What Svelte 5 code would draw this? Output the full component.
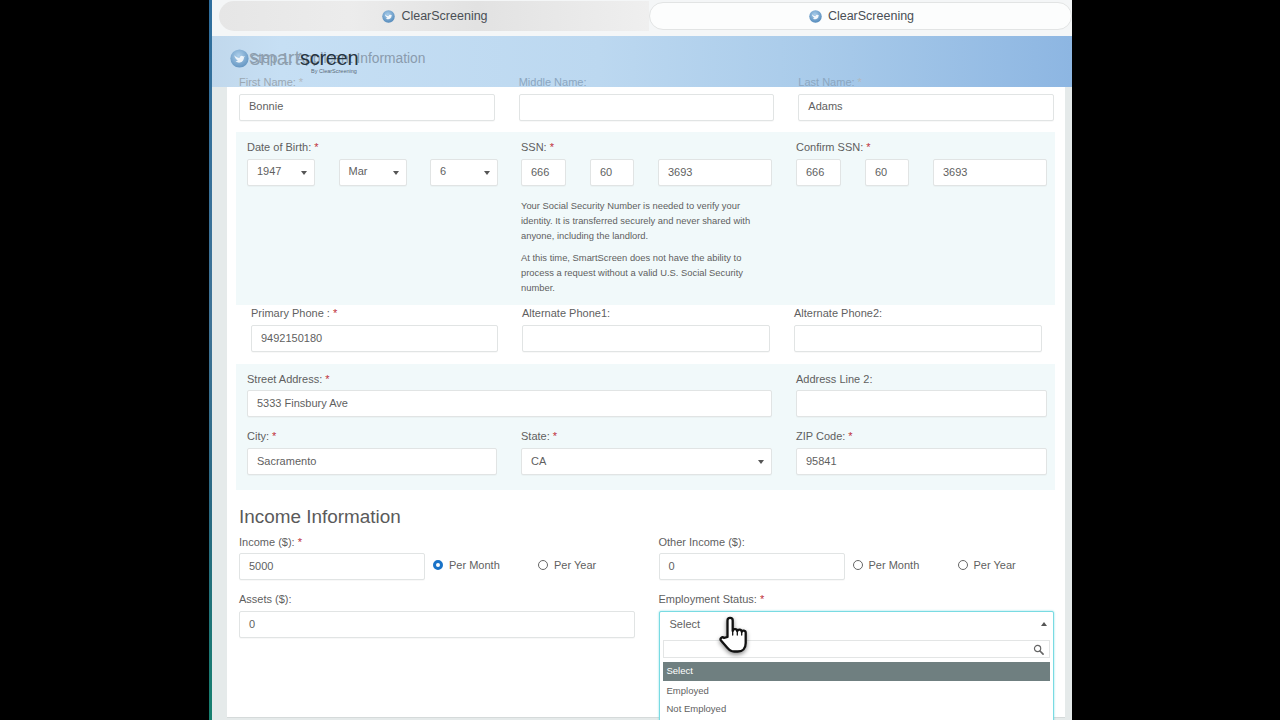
<script>
  const row1 = [
    { label: 'First Name:', req: true, value: 'Bonnie' },
    { label: 'Middle Name:', req: false, value: '' },
    { label: 'Last Name:', req: true, value: 'Adams' }
  ];
  const phones = [
    { label: 'Primary Phone :', req: true, value: '9492150180' },
    { label: 'Alternate Phone1:', req: false, value: '' },
    { label: 'Alternate Phone2:', req: false, value: '' }
  ];
</script>

{#snippet badge(cls)}
  <svg class={cls} viewBox="0 0 20 20" aria-hidden="true">
    <defs>
      <radialGradient id="orb{cls}" cx="45%" cy="35%" r="70%">
        <stop offset="0" stop-color="#a9cdea" />
        <stop offset="1" stop-color="#4f86b8" />
      </radialGradient>
    </defs>
    <circle cx="10" cy="10" r="9.6" fill="url(#orb{cls})" />
    <path d="M4.5 6.5c2 2 3.6 2.8 5.6 3 0-2 2.4-3.2 4-1.6l1.6-.5-1 1.5c0 3.6-3.2 6-6.2 5.4-1-.2-2-.7-2.6-1.4 1 0 1.8-.2 2.4-.8-1.600-.8-3.400-3.200-3.800-5.600z" fill="#fff" opacity=".9" />
  </svg>
{/snippet}

{#snippet req()}<span class="star">*</span>{/snippet}

{#snippet select(value)}
  <div class="box select"><span>{value}</span><i class="caret"></i></div>
{/snippet}

{#snippet radio(text, on)}
  <div class="radio"><i class={on ? 'dot on' : 'dot'}></i><span>{text}</span></div>
{/snippet}

<div class="screen">
  <div class="strip"></div>
  <div class="browser">
    <div class="tabs">
      <div class="tab left">{@render badge('tabicon')}<span>ClearScreening</span></div>
      <div class="tab right">{@render badge('tabicon')}<span>ClearScreening</span></div>
    </div>

    <header class="banner">
      <h1>Step 1: Applicant Information</h1>
      <div class="logo">
        {@render badge('logoicon')}
        <div class="wordmark"><span class="smart">smart</span><span class="scr">screen</span></div>
        <div class="by">By ClearScreening</div>
      </div>
    </header>

    <main class="panel">
      <div class="form">
        <div class="cols3 names">
          {#each row1 as f, i}
            <div>
              <div class={i === 0 ? 'label faded' : 'label faded blue'}>{f.label}{#if f.req}<span class="fadestar">*</span>{/if}</div>
              <div class="box">{f.value}</div>
            </div>
          {/each}
        </div>

        <section class="tint id">
          <div class="tintgrid">
            <div>
              <div class="label">Date of Birth:{@render req()}</div>
              <div class="dob">
                {@render select('1947')}
                {@render select('Mar')}
                {@render select('6')}
              </div>
            </div>
            <div>
              <div class="label">SSN:{@render req()}</div>
              <div class="ssn">
                <div class="box">666</div>
                <div class="box">60</div>
                <div class="box">3693</div>
              </div>
              <div class="help">
                <p>Your Social Security Number is needed to verify your identity. It is transferred securely and never shared with anyone, including the landlord.</p>
                <p>At this time, SmartScreen does not have the ability to process a request without a valid U.S. Social Security number.</p>
              </div>
            </div>
            <div>
              <div class="label">Confirm SSN:{@render req()}</div>
              <div class="ssn">
                <div class="box">666</div>
                <div class="box">60</div>
                <div class="box">3693</div>
              </div>
            </div>
          </div>
        </section>

        <div class="phones">
          {#each phones as f}
            <div>
              <div class="label">{f.label}{#if f.req}{@render req()}{/if}</div>
              <div class="box">{f.value}</div>
            </div>
          {/each}
        </div>

        <section class="tint addr">
          <div class="tintgrid">
            <div class="wide">
              <div class="label low">Street Address:{@render req()}</div>
              <div class="box">5333 Finsbury Ave</div>
            </div>
            <div>
              <div class="label low">Address Line 2:</div>
              <div class="box"></div>
            </div>
            <div>
              <div class="label">City:{@render req()}</div>
              <div class="box">Sacramento</div>
            </div>
            <div>
              <div class="label">State:{@render req()}</div>
              {@render select('CA')}
            </div>
            <div>
              <div class="label">ZIP Code:{@render req()}</div>
              <div class="box">95841</div>
            </div>
          </div>
        </section>

        <h2>Income Information</h2>

        <div class="cols2">
          <div>
            <div class="label low">Income ($):{@render req()}</div>
            <div class="inc">
              <div class="box">5000</div>
              {@render radio('Per Month', true)}
              {@render radio('Per Year', false)}
            </div>
          </div>
          <div>
            <div class="label low">Other Income ($):</div>
            <div class="inc">
              <div class="box">0</div>
              {@render radio('Per Month', false)}
              {@render radio('Per Year', false)}
            </div>
          </div>
          <div>
            <div class="label">Assets ($):</div>
            <div class="box">0</div>
          </div>
          <div>
            <div class="label">Employment Status:{@render req()}</div>
            <div class="dropdown">
              <div class="ddhead"><span>Select</span><i class="caret up"></i></div>
              <div class="search">
                <svg viewBox="0 0 12 12" aria-hidden="true"><circle cx="5" cy="5" r="3.400" fill="none" stroke="#666" stroke-width="1.300" /><path d="M7.600 7.600 11 11" stroke="#666" stroke-width="1.800" stroke-linecap="round" /></svg>
              </div>
              <div class="opt active">Select</div>
              <div class="opt">Employed</div>
              <div class="opt">Not Employed</div>
            </div>
          </div>
        </div>
      </div>
    </main>
  </div>

  <svg class="hand" viewBox="0 0 30 38" aria-hidden="true">
    <path d="M8.500 21V4.500a2.600 2.600 0 0 1 5.200 0V15c.1-2.600 4.500-2.600 4.600.2.200-2.300 4.300-2.100 4.400.6.500-1.900 4-1.500 4 1V27c0 5-3 8.500-8 8.500h-3.500c-3 0-5-1.200-6.700-3.600L2 24.500c-1.500-2.100 1.200-4.300 3-2.600z" fill="#fff" stroke="#111" stroke-width="2.300" stroke-linejoin="round" />
    <path d="M13.700 15v4M18.300 15.200V19M22.700 16v3" fill="none" stroke="#111" stroke-width="1.300" stroke-linecap="round" />
  </svg>
</div>

<style>
  :global(body) { margin: 0; background: #000; }
  .screen {
    position: relative; display: flex; width: 1280px; height: 720px; overflow: hidden;
    background: #000; padding-left: 209px; box-sizing: border-box;
    font-family: "Liberation Sans", Arial, sans-serif; font-size: 11px; color: #5f5f5f;
  }
  .strip { width: 3px; flex: none; background: linear-gradient(#2f6f9e, #3f7396 45%, #2b6a84 70%, #17806f); }
  .browser { width: 860px; flex: none; height: 720px; display: flex; flex-direction: column; background: #e5eaea; }

  .tabs { height: 36px; flex: none; display: flex; background: #f4f6f7; padding: 1px 0 0 7px; box-sizing: border-box; }
  .tab { height: 30px; display: flex; align-items: center; justify-content: center; gap: 6px; padding-left: 2px; font-size: 12.500px; color: #4a4f55; box-sizing: border-box; }
  .tab.left { width: 430px; border-radius: 15px 0 0 15px; background: linear-gradient(90deg, #e6e6e6, #ececec 30%, #e2e2e2 60%, #efefef); }
  .tab.right { flex: 1; border: 1px solid #e2e4e4; border-radius: 14px; background: #fcfdfd; margin-top: 1px; height: 28px; }
  :global(.tabicon) { width: 13px; height: 13px; flex: none; }

  .banner {
    position: relative; height: 51px; flex: none; box-sizing: border-box; padding: 14px 0 0 37px;
    background: linear-gradient(90deg, #c1d8ec 0, #c6dff4 8%, #bcd8f0 45%, #a9cbea 70%, #8db6e2 100%);
  }
  h1 { margin: 0; font-weight: 400; font-size: 13.800px; line-height: 18px; color: #8a9bad; }
  .logo { position: absolute; left: 18px; top: 10px; width: 135px; height: 30px; }
  :global(.logoicon) { position: absolute; left: 0; top: 3px; width: 19px; height: 19px; opacity: .85; }
  .wordmark { position: absolute; left: 20px; top: 1px; font-size: 20px; line-height: 22px; white-space: nowrap; }
  .smart { color: #8f9fae; }
  .scr { color: #26343f; letter-spacing: -.3px; }
  .by { position: absolute; left: 81px; top: 21px; font-size: 5.500px; line-height: 8px; color: #5b6b7a; white-space: nowrap; }

  .panel { position: relative; height: 630px; flex: none; margin: 0 7px 0 15px; background: #fff; box-shadow: 0 1px 0 #d5dada; }
  .form { position: relative; margin-top: -12px; padding: 0 11px 0 12px; }

  .label { height: 19px; line-height: 14px; font-size: 11px; color: #5f5f5f; white-space: nowrap; }
  .label.low { line-height: 16px; }
  .label.faded { color: #9aa7b2; }
  .label.blue { color: #8ba6c0; }
  .fadestar { color: #b2b9c0; margin-left: 3px; }
  .star { color: #c0303a; margin-left: 3px; }

  .box {
    height: 27px; box-sizing: border-box; border: 1px solid #e1e4e4; border-radius: 2px; background: #fff;
    padding: 0 9px; line-height: 24px; font-size: 11px; color: #5f5f5f; white-space: nowrap;
    box-shadow: 0 1px 1px rgba(0,0,0,.03);
  }
  .names .box { line-height: 23px; }
  .select { position: relative; line-height: 22px; }
  .addr .select { line-height: 24px; }
  .caret { position: absolute; right: 7px; top: 11px; width: 0; height: 0; border: 3px solid transparent; border-top: 4px solid #555; border-bottom: 0; }
  .caret.up { border-top: 0; border-bottom: 4px solid #555; }

  .cols3 { display: grid; grid-template-columns: repeat(3, minmax(0, 1fr)); gap: 24px; }
  .cols2 { display: grid; grid-template-columns: repeat(2, minmax(0, 1fr)); column-gap: 24px; row-gap: 12px; }
  .tintgrid { display: grid; grid-template-columns: 250px 251px minmax(0, 1fr); column-gap: 24px; row-gap: 12px; }

  .tint { background: #f1f9fa; margin: 0 -1px 0 -3px; padding-left: 11px; padding-right: 8px; }
  .id { margin-top: 11px; padding-top: 8px; padding-bottom: 10px; }
  .dob { display: grid; grid-template-columns: repeat(3, 1fr); column-gap: 23.500px; margin-right: -1px; }
  .ssn { display: grid; grid-template-columns: 45px 44px 1fr; gap: 24px; }
  .help { margin-top: 12px; font-size: 9.400px; line-height: 15px; color: #5f5f5f; width: 236px; }
  .help p { margin: 0 0 7px; }
  .help p:last-child { margin: 0; }

  .phones { display: grid; grid-template-columns: 247px 248px minmax(0, 1fr); column-gap: 24px; padding: 1px 12px 0; }
  .addr { margin-top: 12px; padding-top: 7px; padding-bottom: 15px; }
  .wide { grid-column: span 2; }

  h2 { margin: 15px 0 5px; font-weight: 400; font-size: 18.900px; line-height: 24px; color: #5a5a5a; }

  .inc { display: flex; align-items: flex-start; }
  .inc .box { width: 186px; flex: none; }
  .radio { display: flex; align-items: center; width: 105px; height: 24px; margin-left: 8px; font-size: 11px; color: #5f5f5f; gap: 6px; }
  .radio + .radio { margin-left: 0; width: auto; }
  .dot { width: 8px; height: 8px; box-sizing: content-box; border: 1px solid #666; border-radius: 50%; background: #fff; flex: none; }
  .dot.on { width: 4px; height: 4px; border: 3px solid #1a73c8; }

  .dropdown { position: relative; height: 130px; border: 1px solid #79dbe2; border-radius: 2px; box-sizing: border-box; background: #fff; box-shadow: 0 0 2px rgba(90,210,222,.8); padding: 0 3px; }
  .ddhead { position: relative; height: 28px; line-height: 24px; padding-left: 7px; color: #5f5f5f; }
  .ddhead .caret { right: 3px; top: 10px; }
  .search { position: relative; height: 18px; border: 1px solid #e3e5e5; box-sizing: border-box; background: #fff; }
  .search svg { position: absolute; right: 5px; top: 3px; width: 11px; height: 11px; }
  .opt { height: 19px; line-height: 19px; padding-left: 4px; font-size: 9.500px; color: #5f5f5f; }
  .opt.active { margin-top: 4px; background: #6f7f80; color: #fff; line-height: 18px; }
  .opt:last-child { line-height: 17px; }

  .hand { position: absolute; left: 719px; top: 616px; width: 30px; height: 38px; filter: drop-shadow(0 2px 2px rgba(0,0,0,.45)); }
</style>
